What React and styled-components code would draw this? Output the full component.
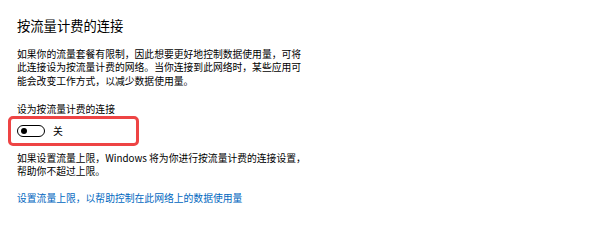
import React from 'react';
import styled, { createGlobalStyle } from 'styled-components';

const GlobalStyle = createGlobalStyle`
  html, body {
    margin: 0;
    padding: 0;
    background: #ffffff;
  }
  body {
    font-family: "Noto Sans CJK SC", "Noto Sans", sans-serif;
    color: #000000;
  }
`;

const Page = styled.div`
  width: 600px;
  height: 222px;
  box-sizing: border-box;
  padding: 16px 0 0 17px;
  display: flex;
  flex-direction: column;
  align-items: flex-start;
`;

const Title = styled.h2`
  margin: 0;
  font-size: 13.3px;
  font-weight: 400;
  line-height: 20px;
`;

const Text = styled.p`
  margin: ${p => p.top || 0}px 0 0;
  font-size: 9.8px;
  line-height: 13.3px;
  white-space: nowrap;
`;

const Label = styled.div`
  margin-top: 15px;
  font-size: 9.8px;
  line-height: 13.3px;
`;

const Highlight = styled.div`
  margin: 0 0 0 -9px;
  width: 131px;
  height: 30px;
  box-sizing: border-box;
  border: 3px solid #ee4444;
  border-radius: 5px;
  display: flex;
  align-items: center;
  gap: 8px;
  padding-left: 6px;
`;

const Switch = styled.span`
  width: 28px;
  height: 12px;
  box-sizing: border-box;
  border: 1.3px solid #000;
  border-radius: 7px;
  display: flex;
  align-items: center;
  padding-left: 3px;
`;

const Knob = styled.span`
  width: 6px;
  height: 6px;
  border-radius: 50%;
  background: #000;
`;

const State = styled.span`
  font-size: 9.8px;
  line-height: 13px;
`;

const Link = styled.a`
  margin-top: 13px;
  font-size: 9.8px;
  line-height: 13.3px;
  color: #0067c0;
  text-decoration: none;
`;

export default function App() {
  return (
    <>
      <GlobalStyle />
      <Page>
        <Title>按流量计费的连接</Title>
        <Text top={12}>
          如果你的流量套餐有限制，因此想要更好地控制数据使用量，可将<br />
          此连接设为按流量计费的网络。当你连接到此网络时，某些应用可<br />
          能会改变工作方式，以减少数据使用量。
        </Text>
        <Label>设为按流量计费的连接</Label>
        <Highlight>
          <Switch><Knob /></Switch>
          <State>关</State>
        </Highlight>
        <Text top={6}>
          如果设置流量上限，Windows 将为你进行按流量计费的连接设置，<br />
          帮助你不超过上限。
        </Text>
        <Link href="#">设置流量上限，以帮助控制在此网络上的数据使用量</Link>
      </Page>
    </>
  );
}
